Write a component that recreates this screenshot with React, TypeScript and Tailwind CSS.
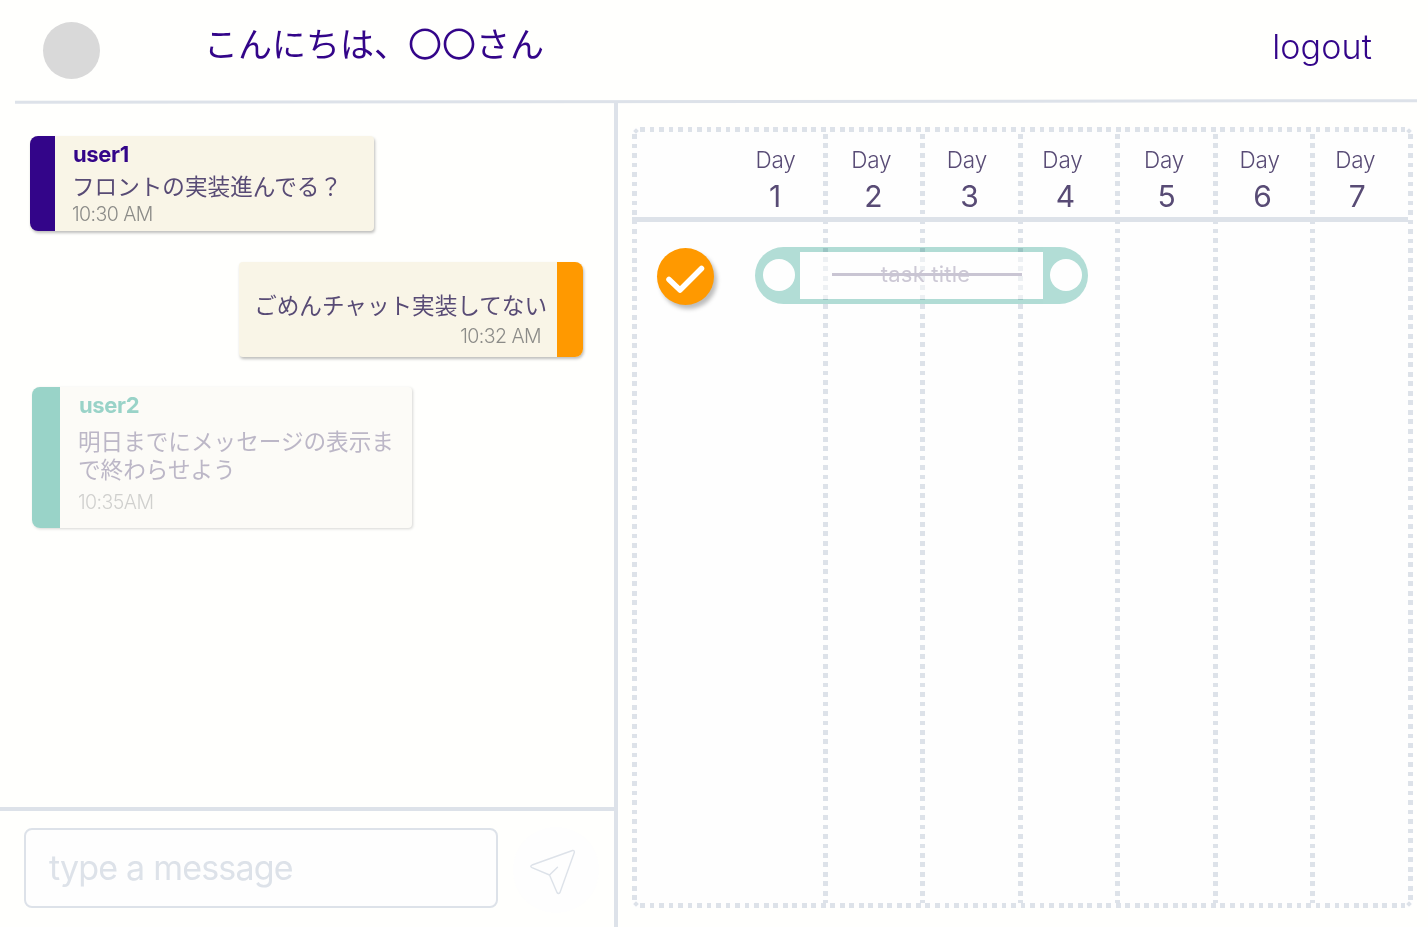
const days = [
  { n: 1, cell: "w-[187px] pl-[90px]", num: "pr-[1px]" },
  { n: 2, cell: "w-[92.6px] pr-[8px]", num: "pl-[4px]" },
  { n: 3, cell: "w-[92.6px] pr-[12px]", num: "pl-[5px]" },
  { n: 4, cell: "w-[92.6px] pr-[16px]", num: "pl-[6px]" },
  { n: 5, cell: "w-[92.6px] pr-[8px]", num: "pl-[5px]" },
  { n: 6, cell: "w-[92.6px] pr-[12px]", num: "pl-[6px]" },
  { n: 7, cell: "w-[92.6px] pr-[16px]", num: "pl-[4px]" },
];

const Row = () => (
  <div className="ml-[8px] h-[5px] w-[765px] shrink-0 bg-[repeating-linear-gradient(90deg,#dde2e9_0,#dde2e9_4.8px,transparent_4.8px,transparent_9.516px)]" />
);

const Column = () => (
  <div className="w-[5px] shrink-0 bg-[repeating-linear-gradient(180deg,#dde2e9_0,#dde2e9_4.8px,transparent_4.8px,transparent_9.46px)]" />
);

const Edge = () => (
  <div className="h-[766px] w-[5px] shrink-0 bg-[repeating-linear-gradient(180deg,#dde2e9_0,#dde2e9_4.8px,transparent_4.8px,transparent_9.516px)]" />
);

const Corner = ({ className }: { className: string }) => (
  <i className={`absolute h-[4px] w-[4px] rotate-45 bg-[#dde2e9] ${className}`} />
);

const jp = "font-['Noto_Sans_CJK_JP',sans-serif]";
const time = "block h-[24px] w-max text-[19.5px] leading-[24px] font-[350] tracking-[-0.55px]";
const shadow = "shadow-[1px_2px_3px_rgba(0,0,0,0.26)]";

function Messages() {
  return (
    <section className="flex h-[704px] flex-col pt-[33px]">
      <article className={`ml-[30px] flex h-[95px] w-[344px] overflow-hidden rounded-l-[8px] rounded-r-[4px] bg-[#f9f5e7] ${shadow}`}>
        <div className="w-[25px] bg-[#330589]" />
        <div className="pl-[17px]">
          <h2 className="mt-[5px] ml-px h-[26px] w-max text-[22px] leading-[26px] font-bold tracking-[-0.35px] text-[#330589]">user1</h2>
          <p className={`mt-[4px] h-[30px] whitespace-nowrap text-[22.6px] leading-[30px] text-[#584b75] ${jp}`}>フロントの実装進んでる？</p>
          <time className={`mt-[1px] text-[#8b8b88] ${time}`}>10:30 AM</time>
        </div>
      </article>
      <article className={`mt-[31px] ml-[239px] flex h-[95px] w-[344px] justify-end overflow-hidden rounded-l-[4px] rounded-r-[8px] bg-[#f9f5e7] ${shadow}`}>
        <div className="flex flex-col items-end">
          <p className={`mt-[28px] mr-[10px] h-[30px] whitespace-nowrap text-[22.6px] leading-[30px] text-[#584b75] ${jp}`}>ごめんチャット実装してない</p>
          <time className={`mt-[4px] mr-[16px] text-[#8b8b88] ${time}`}>10:32 AM</time>
        </div>
        <div className="w-[26px] bg-[#ff9900]" />
      </article>
      <article className="mt-[30px] ml-[32px] flex h-[141px] w-[380px] overflow-hidden rounded-l-[8px] rounded-r-[4px] bg-[#fcfbf7] shadow-[1px_1px_3px_rgba(0,0,0,0.16)]">
        <div className="w-[28px] bg-[#99d3c8]" />
        <div className="pl-[18px]">
          <h2 className="mt-[5px] ml-px h-[26px] w-max text-[22px] leading-[26px] font-bold tracking-[-0.35px] text-[#99d3c8]">user2</h2>
          <p className={`mt-[9px] w-[320px] text-[22.6px] leading-[27.5px] text-[#bcb7c7] ${jp}`}>
            明日までにメッセージの表示ま<br />で終わらせよう
          </p>
          <time className={`mt-[8px] text-[#d0d0ce] ${time}`}>10:35AM</time>
        </div>
      </article>
    </section>
  );
}

function Composer() {
  return (
    <form className="flex h-[116px] pt-[17px] pl-[24px]">
      <div className="flex h-[80px] w-[474px] items-center rounded-[8px] border-2 border-[#dde2e9] bg-[#fefefe] pl-[23px]">
        <span className="text-[34px] leading-[42px] tracking-[-0.8px] text-[#dde2e9]">type a message</span>
      </div>
      <button type="button" aria-label="Send" className="-mt-px ml-[15px] flex h-[86px] w-[86px] items-center justify-center rounded-full bg-[#fefefe]">
        <svg width="86" height="86" viewBox="513 826 86 86" fill="none" stroke="#dde2e9" strokeWidth="1.4" strokeLinejoin="round" strokeLinecap="round">
          <path d="M572.5 849.5 L532 864 Q529.5 865.3 532 866.6 L549.5 874 L557 891.5 Q558.5 893.5 560 891.5 L574.3 851.5 Q574.5 849 572.5 849.5 Z M549.5 874 L557.5 866.3" />
        </svg>
      </button>
    </form>
  );
}

function Timeline() {
  return (
    <section className="relative mt-[24px] ml-[14px] h-[781px] w-[781px] rounded-[5px] bg-[#fefefe]">
      <Row />
      <div className="flex h-[771px] pt-[2px]">
        <Edge />
        <div className="flex flex-1 justify-between pr-[93px] pl-[185.5px]">
          <Column />
          <Column />
          <Column />
          <Column />
          <Column />
          <Column />
        </div>
        <Edge />
      </div>
      <Row />
      <Corner className="top-[2px] left-[2px]" />
      <Corner className="top-[2px] right-[2px]" />
      <Corner className="bottom-[2px] left-[2px]" />
      <Corner className="right-[2px] bottom-[2px]" />
      <div className="absolute inset-0 flex flex-col">
        <div className="flex h-[90px] pt-[19px] pl-[5px] text-[#584b75]">
          {days.map((d) => (
            <div key={d.n} className={`mr-[5px] flex shrink-0 flex-col items-center ${d.cell}`}>
              <span className="text-[22.5px] leading-[28px] font-[350] tracking-[-0.15px]">Day</span>
              <span className={`mt-[3px] text-[30px] leading-[38px] font-[380] ${d.num}`}>{d.n}</span>
            </div>
          ))}
        </div>
        <div className="h-[4.5px] w-[776px] bg-[#dde2e9]" />
        <div className="flex pt-[25.5px] pl-[24.5px]">
          <div className="mt-[1px] flex h-[57px] w-[57px] items-center justify-center rounded-full bg-[#ff9900] shadow-[3px_4px_4px_rgba(0,0,0,0.26)]">
            <svg width="57" height="57" viewBox="0 0 57 57" fill="none" stroke="white" strokeWidth="5.5" strokeLinecap="round" strokeLinejoin="round">
              <path d="M12 31.5 L23 42 L44.5 20.5" />
            </svg>
          </div>
          <div className="ml-[41.5px] flex h-[57px] w-[333px]">
            <div className="flex w-[45px] items-center rounded-l-full bg-[#b2ddd6] pb-px pl-[8px]"><i className="h-[32px] w-[32px] rounded-full bg-[#fefefe]" /></div>
            <div className="flex w-[243px] flex-col">
              <div className="h-[5px] bg-[#b2ddd6] mix-blend-multiply" />
              <div className="flex flex-1 items-center justify-center bg-[#fefefe]/50 pb-[3px] pl-[10px]">
                <div className="relative flex h-[30px] w-[190px] items-center justify-center text-[22px] leading-[30px] font-[370] tracking-[0.2px] text-[#ccc8d5]">
                  <span className="pr-[2px]">task title</span>
                  <i className="absolute top-[14px] left-0 h-[3px] w-full bg-[#c9c5d3]" />
                </div>
              </div>
              <div className="h-[5px] bg-[#b2ddd6] mix-blend-multiply" />
            </div>
            <div className="flex w-[45px] items-center rounded-r-full bg-[#b2ddd6] pb-px pl-[7px]"><i className="h-[32px] w-[32px] rounded-full bg-[#fefefe]" /></div>
          </div>
        </div>
      </div>
    </section>
  );
}

export default function App() {
  return (
    <main className="flex h-[927px] w-[1428px] flex-col overflow-hidden bg-[#fffffd] font-[Inter,sans-serif]">
      <header className="flex h-[100px] shrink-0 items-start pt-[21.5px] pl-[43px]">
        <div className="h-[57px] w-[57px] rounded-full bg-[#d9d9d9]" />
        <h1 className={`-mt-px ml-[104px] whitespace-nowrap text-[34px] leading-[44px] text-[#330589] ${jp}`}>こんにちは、〇〇さん</h1>
        <a className="mr-[56px] ml-auto text-[34px] leading-[49px] font-[350] tracking-[0.15px] text-[#330589]">logout</a>
      </header>
      <div className="ml-[15px] h-[3px] w-[1402px] shrink-0 -rotate-[0.07deg] bg-[#dde2e9]" />
      <div className="flex flex-1">
        <div className="flex w-[614px] flex-col">
          <Messages />
          <div className="h-[4px] bg-[#dde2e9]" />
          <Composer />
        </div>
        <div className="w-[4px] bg-[#dde2e9]" />
        <Timeline />
      </div>
    </main>
  );
}
